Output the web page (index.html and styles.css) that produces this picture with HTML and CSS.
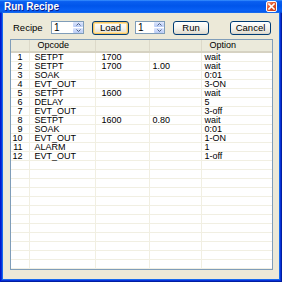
FILE: index.html
```html
<!DOCTYPE html>
<html lang="en">
<head>
  <meta charset="UTF-8" />
  <title>Run Recipe</title>
  <link rel="stylesheet" href="styles.css">
</head>
<body>
  <div class="window">
    <div class="titlebar">
      <span class="title">Run Recipe</span>
      <span class="close">
        <svg width="7" height="7" viewBox="0 0 7 7"><path d="M1 1L6 6M6 1L1 6" stroke="#fff" stroke-width="1.6" stroke-linecap="square"/></svg>
      </span>
    </div>

    <div class="frame">
      <div class="toolbar">
        <span class="label">Recipe</span>
        <div class="spin spin-recipe">
          <span class="val">1</span>
          <span class="arrows">
            <i><svg width="5" height="3" viewBox="0 0 5 3"><path d="M0.5 2.5L2.5 0.5L4.5 2.5" fill="none" stroke="#4d6185" stroke-width="1"/></svg></i>
            <i><svg width="5" height="3" viewBox="0 0 5 3"><path d="M0.5 0.5L2.5 2.5L4.5 0.5" fill="none" stroke="#4d6185" stroke-width="1"/></svg></i>
          </span>
        </div>
        <button class="btn btn-load default">Load</button>
        <div class="spin spin-step">
          <span class="val">1</span>
          <span class="arrows">
            <i><svg width="5" height="3" viewBox="0 0 5 3"><path d="M0.5 2.5L2.5 0.5L4.5 2.5" fill="none" stroke="#4d6185" stroke-width="1"/></svg></i>
            <i><svg width="5" height="3" viewBox="0 0 5 3"><path d="M0.5 0.5L2.5 2.5L4.5 0.5" fill="none" stroke="#4d6185" stroke-width="1"/></svg></i>
          </span>
        </div>
        <button class="btn btn-run">Run</button>
        <button class="btn btn-cancel">Cancel</button>
      </div>

      <div class="list">
        <table>
          <colgroup>
            <col class="c-num" />
            <col class="c-op" />
            <col class="c-v1" />
            <col class="c-v2" />
            <col />
          </colgroup>
          <thead>
            <tr><th></th><th>Opcode</th><th></th><th></th><th>Option</th></tr>
          </thead>
          <tbody id="rows"></tbody>
        </table>
      </div>
    </div>
  </div>

  <script>
    const steps = [
      ["SETPT", "1700", "", "wait"],
      ["SETPT", "1700", "1.00", "wait"],
      ["SOAK", "", "", "0:01"],
      ["EVT_OUT", "", "", "3-ON"],
      ["SETPT", "1600", "", "wait"],
      ["DELAY", "", "", "5"],
      ["EVT_OUT", "", "", "3-off"],
      ["SETPT", "1600", "0.80", "wait"],
      ["SOAK", "", "", "0:01"],
      ["EVT_OUT", "", "", "1-ON"],
      ["ALARM", "", "", "1"],
      ["EVT_OUT", "", "", "1-off"]
    ];

    const tbody = document.getElementById("rows");
    for (let i = 0; i < 24; i++) {
      const s = steps[i];
      const tr = document.createElement("tr");
      const cells = s ? [String(i + 1)].concat(s) : ["", "", "", "", ""];
      cells.forEach(function (text) {
        const td = document.createElement("td");
        td.textContent = text;
        tr.appendChild(td);
      });
      tbody.appendChild(tr);
    }
  </script>
</body>
</html>
```

FILE: styles.css
```css
body {
  margin: 0;
  font-family: "Liberation Sans", Arial, sans-serif;
  font-size: 9px;
  color: #000;
}
.window {
  width: 282px;
  height: 282px;
  display: flex;
  flex-direction: column;
  background-color: #0831d9;
  box-shadow: inset 1px 0 0 #0019cf, inset -1px 0 0 #001ea0, inset 0 -1px 0 #001ea0;
}
.titlebar {
  height: 14px;
  display: flex;
  align-items: center;
  padding: 0 5px 0 4px;
  background: linear-gradient(to bottom, #3d95ff 0%, #0a5ff0 12%, #0055ea 45%, #0a62f6 85%, #0046d5 100%);
}
.title {
  flex: 1;
  color: #fff;
  font-weight: bold;
  font-size: 10px;
  text-shadow: 1px 1px 0 #0a1d8c;
}
.close {
  width: 11px;
  height: 11px;
  box-sizing: border-box;
  display: flex;
  align-items: center;
  justify-content: center;
  border: 1px solid #fff;
  border-radius: 2px;
  background: linear-gradient(135deg, #f0a088 0%, #e2582f 40%, #c73a13 100%);
}
.frame {
  flex: 1;
  margin: 0 3px 3px;
  display: flex;
  flex-direction: column;
  background-color: #ece9d8;
  box-shadow: 0 0 0 1px #166aee;
}
.toolbar {
  display: flex;
  align-items: center;
  height: 13px;
  margin-top: 8px;
  padding-left: 10px;
}
.label {
  font-size: 9.5px;
  margin-right: 8px;
  width: 30px;
}
.spin {
  height: 13px;
  box-sizing: border-box;
  display: flex;
  background-color: #fff;
  border: 1px solid #7f9db9;
}
.spin-recipe {
  width: 33px;
  margin-right: 8px;
}
.spin-step {
  width: 30px;
  margin-right: 8px;
}
.spin .val {
  flex: 1;
  line-height: 11px;
  padding-left: 2px;
  font-size: 10px;
}
.arrows {
  width: 10px;
  display: flex;
  flex-direction: column;
  gap: 1px;
  padding: 0 0 0 1px;
}
.arrows i {
  flex: 1;
  display: flex;
  align-items: center;
  justify-content: center;
  background: linear-gradient(to bottom, #dde6fc, #b8cbf6);
  border-radius: 1px;
}
.btn {
  height: 14px;
  padding: 0;
  box-sizing: border-box;
  font-family: "Liberation Sans", Arial, sans-serif;
  font-size: 9.5px;
  line-height: 12px;
  color: #000;
  border: 1px solid #003c74;
  border-radius: 3px;
  background: linear-gradient(to bottom, #ffffff 0%, #f4f3ee 50%, #e3e0d5 90%, #d6d0c5 100%);
}
.btn.default {
  box-shadow: inset 0 0 0 1px #f6c462, inset 0 0 0 2px #ffe3a0;
}
.btn-load {
  width: 37px;
  margin-right: 6px;
}
.btn-run {
  width: 36px;
  margin-right: 21px;
}
.btn-cancel {
  width: 41px;
}
.list {
  flex: 1;
  margin: 5px 6px 9px 7px;
  background-color: #fff;
  border: 1px solid #7f9db9;
  overflow: hidden;
}
table {
  width: 100%;
  table-layout: fixed;
  border-collapse: collapse;
}
.c-num { width: 18px; }
.c-op { width: 66px; }
.c-v1 { width: 54px; }
.c-v2 { width: 52px; }
th {
  height: 11px;
  padding: 0 0 0 8px;
  font-weight: normal;
  font-size: 9px;
  line-height: 11px;
  text-align: left;
  background-color: #ebeadb;
  border-right: 1px solid #dcd9c9;
  border-bottom: 2px solid #d6d2c2;
  white-space: nowrap;
  overflow: hidden;
}
th:last-child {
  border-right: none;
}
td {
  height: 8px;
  padding: 0 0 0 4px;
  line-height: 8px;
  font-size: 9px;
  white-space: nowrap;
  border-right: 1px solid #f1efe2;
  border-bottom: 1px solid #f1efe2;
}
td:first-child {
  text-align: right;
  padding: 0 6px 0 0;
}
td:nth-child(2) {
  padding-left: 5px;
}
td:nth-child(3) {
  padding-left: 6px;
}
td:nth-child(4),
td:nth-child(5) {
  padding-left: 3px;
}
td:last-child {
  border-right: none;
}
```
